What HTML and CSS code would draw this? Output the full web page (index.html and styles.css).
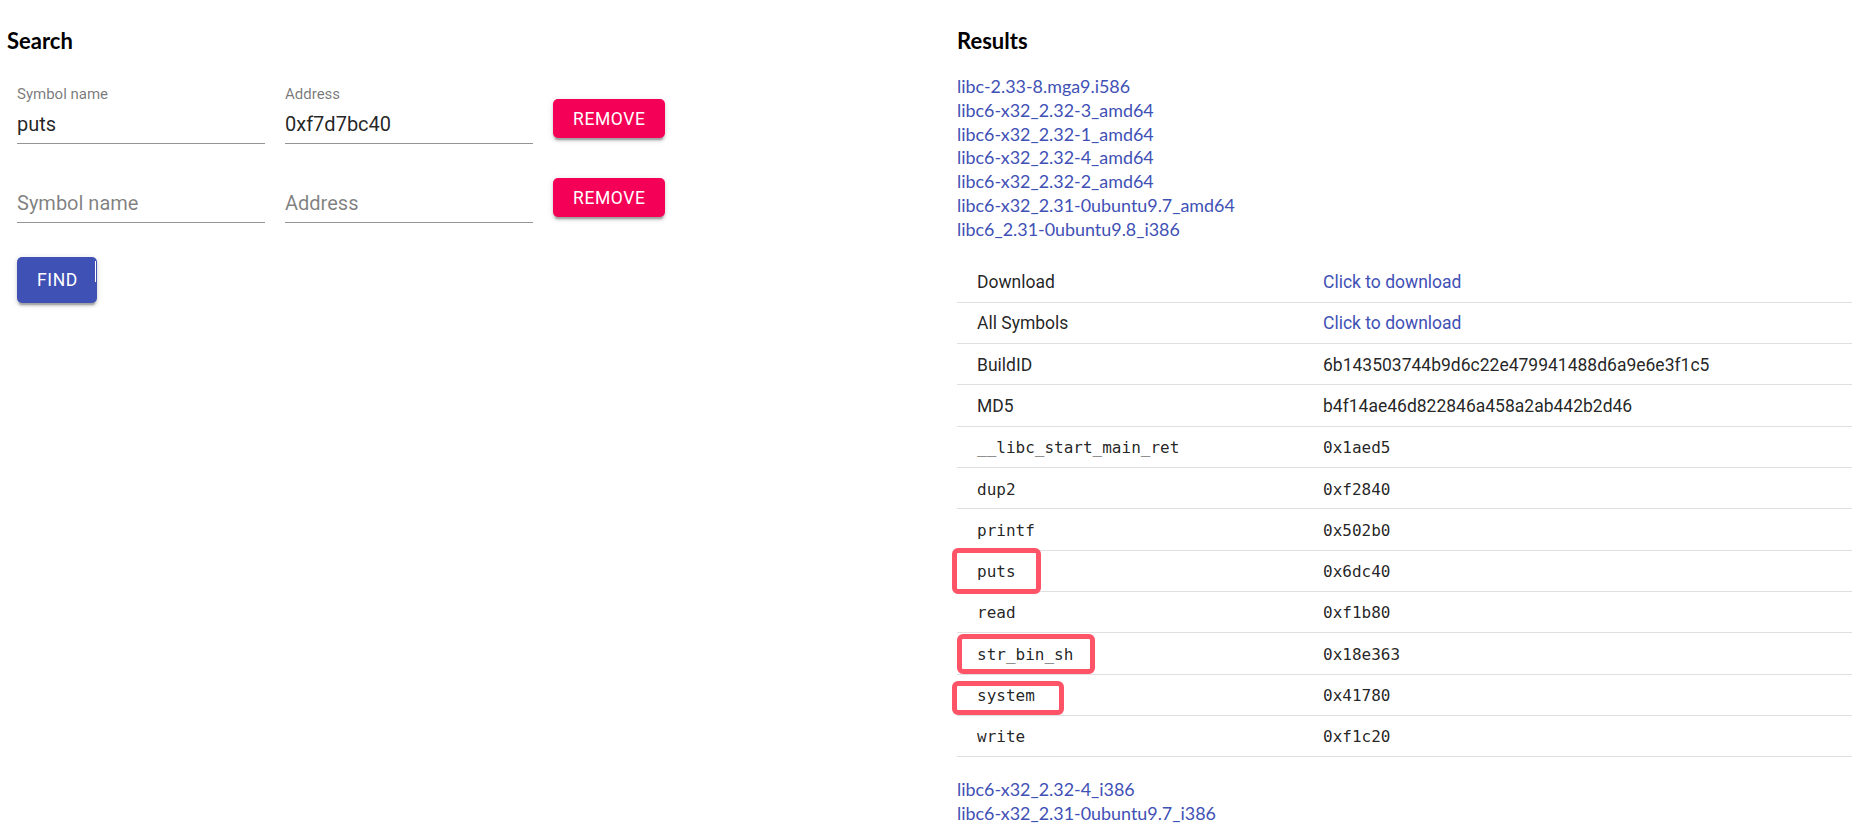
FILE: index.html
```html
<!DOCTYPE html>
<html lang="en">
<head>
<meta charset="utf-8">
<title>libc database search</title>
<link rel="stylesheet" href="styles.css">
</head>
<body>
<div class="page">
  <section class="col-search">
    <h3 class="heading">Search</h3>
    <form class="search-form">
      <div class="search-row">
        <div class="field">
          <div class="field-label">Symbol name</div>
          <div class="field-input">puts</div>
        </div>
        <div class="field">
          <div class="field-label">Address</div>
          <div class="field-input">0xf7d7bc40</div>
        </div>
        <button type="button" class="btn btn-remove">REMOVE</button>
      </div>
      <div class="search-row">
        <div class="field">
          <div class="field-label"></div>
          <div class="field-input placeholder">Symbol name</div>
        </div>
        <div class="field">
          <div class="field-label"></div>
          <div class="field-input placeholder">Address</div>
        </div>
        <button type="button" class="btn btn-remove">REMOVE</button>
      </div>
      <button type="button" class="btn btn-find">FIND</button>
    </form>
  </section>

  <section class="col-results">
    <h3 class="heading">Results</h3>
    <div class="links">
      <a href="#">libc-2.33-8.mga9.i586</a>
      <a href="#">libc6-x32_2.32-3_amd64</a>
      <a href="#">libc6-x32_2.32-1_amd64</a>
      <a href="#">libc6-x32_2.32-4_amd64</a>
      <a href="#">libc6-x32_2.32-2_amd64</a>
      <a href="#">libc6-x32_2.31-0ubuntu9.7_amd64</a>
      <a href="#">libc6_2.31-0ubuntu9.8_i386</a>
    </div>
    <div class="table-wrap">
      <table class="result-table">
        <colgroup><col class="col-key"><col></colgroup>
        <tbody>
          <tr><td>Download</td><td><a href="#">Click to download</a></td></tr>
          <tr><td>All Symbols</td><td><a href="#">Click to download</a></td></tr>
          <tr><td>BuildID</td><td>6b143503744b9d6c22e479941488d6a9e6e3f1c5</td></tr>
          <tr><td>MD5</td><td>b4f14ae46d822846a458a2ab442b2d46</td></tr>
          <tr class="mono"><td>__libc_start_main_ret</td><td>0x1aed5</td></tr>
          <tr class="mono"><td>dup2</td><td>0xf2840</td></tr>
          <tr class="mono"><td>printf</td><td>0x502b0</td></tr>
          <tr class="mono"><td>puts</td><td>0x6dc40</td></tr>
          <tr class="mono"><td>read</td><td>0xf1b80</td></tr>
          <tr class="mono"><td>str_bin_sh</td><td>0x18e363</td></tr>
          <tr class="mono"><td>system</td><td>0x41780</td></tr>
          <tr class="mono"><td>write</td><td>0xf1c20</td></tr>
        </tbody>
      </table>
      <div class="mark mark-puts"></div>
      <div class="mark mark-binsh"></div>
      <div class="mark mark-system"></div>
    </div>
    <div class="links links-bottom">
      <a href="#">libc6-x32_2.32-4_i386</a>
      <a href="#">libc6-x32_2.31-0ubuntu9.7_i386</a>
    </div>
  </section>
</div>
</body>
</html>
```

FILE: styles.css
```css
html, body {
  margin: 0;
  padding: 0;
  background: #ffffff;
}

body {
  font-family: Lato, "Open Sans", sans-serif;
  color: #000;
  overflow: hidden;
}

.page {
  display: grid;
  grid-template-columns: 957px 1fr;
  height: 828px;
}

.col-search {
  padding-left: 7px;
}

.heading {
  font-family: Lato, "Open Sans", sans-serif;
  font-weight: 700;
  font-size: 22px;
  line-height: 27px;
  margin: 27px 0 0 0;
  color: #000;
}

/* ---------- search form ---------- */
.search-form {
  display: flex;
  flex-direction: column;
  align-items: flex-start;
  padding-left: 10px;
  margin-top: 30px;
}

.search-row {
  display: flex;
  align-items: flex-start;
  gap: 20px;
  margin-bottom: 19px;
}

.field {
  width: 248px;
  display: flex;
  flex-direction: column;
  font-family: Roboto, sans-serif;
}

.field-label {
  height: 20px;
  font-size: 15px;
  line-height: 20px;
  color: rgba(0, 0, 0, 0.54);
}

.field-input {
  font-size: 20px;
  line-height: 24px;
  padding: 8px 0 7px 0;
  color: rgba(0, 0, 0, 0.87);
  border-bottom: 1px solid rgba(0, 0, 0, 0.42);
}

.field-input.placeholder {
  color: rgba(0, 0, 0, 0.5);
}

.btn {
  font-family: Roboto, sans-serif;
  font-weight: 400;
  font-size: 17.5px;
  letter-spacing: 0.6px;
  color: #fff;
  border: none;
  border-radius: 5px;
  padding: 0 20px;
  cursor: pointer;
  box-shadow: 0 3.75px 1.25px -2.5px rgba(0, 0, 0, 0.2),
              0 2.5px 2.5px 0 rgba(0, 0, 0, 0.14),
              0 1.25px 6.25px 0 rgba(0, 0, 0, 0.12);
}

.btn-remove {
  background: #f50057;
  height: 39px;
  width: 112px;
  margin-top: 15px;
}

.btn-find {
  position: relative;
  background: #3f51b5;
  height: 46px;
  width: 80px;
  margin-top: 15px;
}

.btn-find::after {
  content: "";
  position: absolute;
  right: 1px;
  top: 4px;
  width: 1.5px;
  height: 21px;
  background: #ffffff;
}

/* ---------- results ---------- */
.links {
  display: flex;
  flex-direction: column;
  margin-top: 21px;
  font-family: Lato, "Open Sans", sans-serif;
  font-size: 17.9px;
  line-height: 23.8px;
}

.links a {
  color: #3f51b5;
  text-decoration: none;
}

.links-bottom {
  margin-top: 21px;
}

.table-wrap {
  position: relative;
  margin-top: 20px;
}

.result-table {
  width: 100%;
  border-collapse: collapse;
  table-layout: fixed;
  font-family: Roboto, sans-serif;
  font-size: 17.5px;
  color: rgba(0, 0, 0, 0.87);
}

.col-key {
  width: 346px;
}

.result-table td {
  padding: 8.5px 20px 6.5px 20px;
  line-height: 25.3px;
  border-bottom: 1px solid #e0e0e0;
  white-space: nowrap;
  text-align: left;
}

.result-table a {
  color: #3f51b5;
  text-decoration: none;
}

.result-table tr.mono td {
  font-family: "DejaVu Sans Mono", "Liberation Mono", monospace;
  font-size: 16px;
}

/* red annotation boxes drawn over the table */
.mark {
  position: absolute;
  box-sizing: border-box;
  border: 5px solid #ff5468;
  border-radius: 6px;
}

.mark-puts {
  left: -5px;
  top: 286px;
  width: 89px;
  height: 46px;
}

.mark-binsh {
  left: 0;
  top: 372px;
  width: 138px;
  height: 40px;
}

.mark-system {
  left: -5px;
  top: 419px;
  width: 112px;
  height: 34px;
}
```
